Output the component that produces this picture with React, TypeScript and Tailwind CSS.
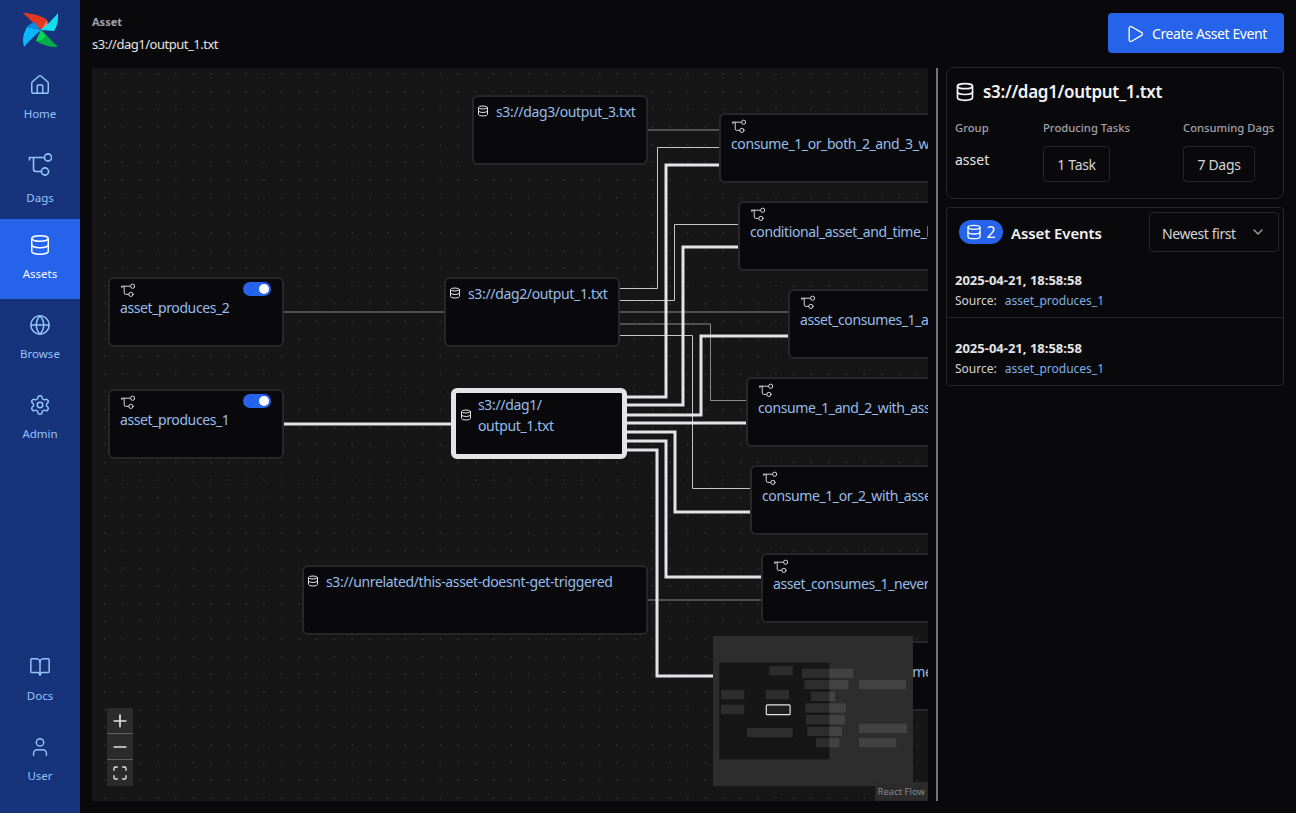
import { BookOpen, ChevronDown, Database, Globe, House, Maximize, Minus, Play, Plus, Settings, User } from "lucide-react";
import type { ReactNode } from "react";

const ui = "font-['Noto_Sans',sans-serif]";

function DagIcon({ className }: { className?: string }) {
  return (
    <svg viewBox="0 0 24 24" fill="none" stroke="currentColor" strokeWidth="1.6" strokeLinecap="round" className={className}>
      <path d="M1.5 5.5H15.5M1.5 5.5v2.5M5.5 5.5v11.5c0 1.6 1 2.5 2.5 2.5h5" />
      <circle cx="20" cy="5.5" r="3.6" />
      <circle cx="17" cy="19.5" r="3.6" />
    </svg>
  );
}

function Logo() {
  return (
    <svg viewBox="0 0 36 36" className="h-9 w-9">
      <path d="M0 1c8 0 17 2 24 7l-6 10z" fill="#e43921" />
      <path d="M24 8l-6 10 6-1c1-3 1-6 0-9z" fill="#ff7557" />
      <path d="M35 1c0 7 0 12-4 18L18 18c6-5 12-11 17-17z" fill="#11e1ee" />
      <path d="M35 35l-17-17-5 11c8 5 15 6 22 6z" fill="#00ad46" />
      <path d="M13 29l5-11 5 6c-3 3-6 5-10 5z" fill="#04d659" />
      <path d="M1 35C-1 28 0 22 4 15l14 3C12 23 6 29 1 35z" fill="#0cb6ff" />
      <path d="M4 15l14 3-7-8c-3 1-5 3-7 5z" fill="#0c8ce9" />
    </svg>
  );
}

function NavItem({ icon, label, active }: { icon: ReactNode; label: string; active?: boolean }) {
  return (
    <div className={`flex h-20 w-20 flex-col items-center justify-center gap-[9px] pb-0.5 text-[11.5px] ${active ? "bg-[#2563eb] text-white" : "text-[#93c5fd]"}`}>
      {icon}
      <span>{label}</span>
    </div>
  );
}

function Sidebar() {
  const icon = "h-[22px] w-[22px] stroke-[1.6]";
  return (
    <nav className="flex h-[813px] w-20 shrink-0 flex-col bg-[#17337b]">
      <div className="flex h-[59px] items-start justify-center pt-3 pl-px">
        <Logo />
      </div>
      <NavItem icon={<House className={icon} />} label="Home" />
      <NavItem icon={<DagIcon className="mt-[3px] mb-1 h-6 w-6" />} label="Dags" />
      <NavItem icon={<Database className={icon} />} label="Assets" active />
      <NavItem icon={<Globe className={icon} />} label="Browse" />
      <NavItem icon={<Settings className={icon} />} label="Admin" />
      <div className="mt-auto pb-3">
        <NavItem icon={<BookOpen className={icon} />} label="Docs" />
        <NavItem icon={<User className={icon} />} label="User" />
      </div>
    </nav>
  );
}

function Toggle() {
  return (
    <span className="absolute top-[3px] right-[11px] flex h-3.5 w-7 items-center justify-end rounded-full bg-[#2563eb] pr-0.5">
      <span className="h-2.5 w-2.5 rounded-full bg-white" />
    </span>
  );
}

type NodeProps = { x: number; y: number; w?: number; name: string; toggle?: boolean };

// x, y are the node's place on the graph canvas
function DagNode({ x, y, w = 176, name, toggle }: NodeProps) {
  return (
    <div style={{ left: x, top: y, width: w }} className="absolute h-[70px] rounded-md border-2 border-[#27272a] bg-[#09090b]">
      <DagIcon className="absolute top-1 left-[11px] h-3.5 w-3.5 text-[#e4e4e7]" />
      <span className="absolute top-[19px] left-[10px] text-sm leading-5 tracking-[-0.4px] whitespace-nowrap text-[#98bdea]">{name}</span>
      {toggle && <Toggle />}
    </div>
  );
}

function AssetNode({ x, y, w = 176, name }: NodeProps) {
  return (
    <div style={{ left: x, top: y, width: w }} className="absolute flex h-[70px] items-start gap-[7px] rounded-md border-2 border-[#27272a] bg-[#09090b] pt-[5px] pl-[3px]">
      <Database className="mt-[3px] h-3 w-3 shrink-0 text-[#e4e4e7]" />
      <span className="text-sm leading-5 tracking-[-0.35px] whitespace-nowrap text-[#98bdea]">{name}</span>
    </div>
  );
}

const thin: [string, boolean][] = [
  ["M556 62H627", false],
  ["M527 220.5H565.5V79.5H627", true],
  ["M527 232.5H582.5V156.5H647", true],
  ["M527 244H696", false],
  ["M527 256H618.5V332.5H654", false],
  ["M527 267.5H600.5V420.5H658", true],
  ["M192 244H352", false],
  ["M556 532H669", false],
];

const thick = [
  "M535 329H574V97H627",
  "M535 337H591V179H647",
  "M535 347H609V268H696",
  "M535 355H654",
  "M535 364H583V444H658",
  "M535 373H574V509H669",
  "M535 382H565V608H630",
  "M192 356H360",
];

function Edges() {
  return (
    <svg width="836" height="733" fill="none" className="absolute top-0 left-0">
      {thin.map(([d, light]) => (
        <path key={d} d={d} stroke={light ? "#c4c4c4" : "#8a8a8a"} strokeWidth="1" />
      ))}
      {thick.map((d) => (
        <path key={d} d={d} stroke="#e4e4e7" strokeWidth="3" />
      ))}
    </svg>
  );
}

const miniNodes = [
  [56.3, 30, 23.4, 9.3],
  [89, 32.7, 51.3, 9.3],
  [91.3, 44, 44, 9.3],
  [98, 55.7, 24, 9.3],
  [92.3, 67.3, 40.7, 9.3],
  [93, 79, 39, 9.3],
  [94.3, 90.7, 34.7, 9.3],
  [103, 102, 23.3, 9.3],
  [146, 44, 47, 9.3],
  [146, 87.7, 48, 9.3],
  [146, 102, 37.3, 9.3],
  [8, 54, 23.3, 9.3],
  [8, 68.7, 23.3, 9.3],
  [52.7, 54, 23.3, 9.3],
  [34, 92, 45.7, 9.3],
];

function MiniMap() {
  return (
    <svg viewBox="0 0 200 150" className="absolute top-[568px] left-[621px] h-[150px] w-[200px]">
      <rect width="200" height="150" fill="#2d2d2d" />
      <rect x="6.3" y="26.7" width="110" height="96.6" fill="#161616" />
      {miniNodes.map(([x, y, w, h]) => (
        <rect key={`${x}-${y}`} x={x} y={y} width={w} height={h} fill="#ffffff" fillOpacity="0.1" />
      ))}
      <rect x="53.3" y="68.9" width="23.8" height="9.8" rx="1" fill="#1f1f1f" stroke="#e4e4e7" strokeWidth="1.2" />
    </svg>
  );
}

function Controls() {
  const btn = "flex h-[26px] w-[26px] items-center justify-center bg-[#2b2b2b] text-[#e4e4e7]";
  return (
    <div className="absolute top-[640px] left-[15px] flex flex-col">
      <div className={`${btn} border-b border-[#5f5f5f]`}><Plus className="h-5 w-5" /></div>
      <div className={`${btn} border-b border-[#5f5f5f]`}><Minus className="h-5 w-5" /></div>
      <div className={btn}><Maximize className="h-4 w-4" /></div>
    </div>
  );
}

function Graph() {
  return (
    <div className="relative h-[733px] flex-1 overflow-hidden bg-[#161616] bg-[radial-gradient(circle,#4a4a4a_0.5px,transparent_0.8px)] bg-size-[17.67px_17.67px] bg-position-[4.2px_-2.8px]">
      <Edges />
      <AssetNode x={380} y={27} name="s3://dag3/output_3.txt" />
      <AssetNode x={352} y={209} name="s3://dag2/output_1.txt" />
      <AssetNode x={210} y={497} w={346} name="s3://unrelated/this-asset-doesnt-get-triggered" />
      <div className="absolute top-[320px] left-[359px] flex h-[71px] w-[176px] items-start rounded-md border-[5px] border-[#e4e4e7] bg-[#09090b] pt-px pl-1">
        <div className="flex items-center gap-1.5">
          <Database className="h-3 w-3 shrink-0 text-[#e4e4e7]" />
          <span className="text-sm leading-[21px] tracking-[-0.35px] text-[#98bdea]">s3://dag1/<br />output_1.txt</span>
        </div>
      </div>
      <DagNode x={16} y={209} name="asset_produces_2" toggle />
      <DagNode x={16} y={321} name="asset_produces_1" toggle />
      <DagNode x={627} y={45} w={400} name="consume_1_or_both_2_and_3_with_asset_expressions" />
      <DagNode x={646} y={133} w={400} name="conditional_asset_and_time_based_timetable" />
      <DagNode x={696} y={221} w={400} name="asset_consumes_1_and_2" />
      <DagNode x={654} y={309} w={400} name="consume_1_and_2_with_asset_expressions" />
      <DagNode x={658} y={397} w={400} name="consume_1_or_2_with_asset_expressions" />
      <DagNode x={669} y={485} w={400} name="asset_consumes_1_never_scheduled" />
      <DagNode x={733} y={573} w={400} name="asset_consumes_1" />
      <MiniMap />
      <Controls />
      <span className="absolute right-0 bottom-0 bg-[#2b2b2b] px-[3px] py-0.5 text-[9.5px] leading-[15px] text-[#8a8a8a]">React Flow</span>
    </div>
  );
}

function Stat({ label, children, className }: { label: string; children: ReactNode; className?: string }) {
  return (
    <div className={className}>
      <div className="text-[11.25px] leading-4 font-medium text-[#a1a1aa]">{label}</div>
      <div className="mt-2.5">{children}</div>
    </div>
  );
}

function EventRow({ last }: { last?: boolean }) {
  return (
    <div className={`px-2 text-xs ${last ? "pt-5 pb-1.5" : "border-b border-[#27272a] pt-2.5 pb-1.5"}`}>
      <div className="pb-px text-[13px] leading-5 font-bold text-[#e4e4e7]">2025-04-21, 18:58:58</div>
      <div className="leading-5 text-[#d4d4d8]">
        Source:<span className="ml-2 text-[#7fb0e6]">asset_produces_1</span>
      </div>
    </div>
  );
}

function DetailPanel() {
  const countBtn = "flex h-9 items-center justify-center rounded border border-[#27272a] pt-px text-sm tracking-[-0.3px] text-[#d4d4d8]";
  return (
    <aside className="-mt-px flex w-[338px] shrink-0 flex-col gap-2">
      <section className="h-[132px] rounded-lg border border-[#27272a] px-2 pt-3">
        <h2 className="flex items-center gap-2 text-[17px] leading-6 font-semibold tracking-[-0.3px] text-[#f4f4f5]">
          <Database className="h-5 w-5" />
          s3://dag1/output_1.txt
        </h2>
        <div className="mt-4 flex">
          <Stat label="Group" className="w-[88px]">
            <div className="pt-1 text-sm leading-5 text-[#e4e4e7]">asset</div>
          </Stat>
          <Stat label="Producing Tasks" className="w-[140px]">
            <div className={`${countBtn} w-[67px]`}>1 Task</div>
          </Stat>
          <Stat label="Consuming Dags">
            <div className={`${countBtn} w-[72px]`}>7 Dags</div>
          </Stat>
        </div>
      </section>
      <section className="rounded border border-[#27272a]">
        <div className="flex h-[52px] items-start justify-between pt-1 pr-1 pl-3">
          <div className="mt-2 flex h-6 items-center">
            <span className="flex h-6 w-11 items-center justify-center gap-1 rounded-full bg-[#2563eb] text-base text-white">
              <Database className="h-4 w-4" />2
            </span>
            <span className="ml-2 pt-px text-[15px] leading-5 font-semibold tracking-[-0.1px] text-[#f4f4f5]">Asset Events</span>
          </div>
          <div className="flex h-10 w-[130px] items-center justify-between rounded border border-[#27272a] px-3 text-sm tracking-[-0.4px] text-[#d4d4d8]">
            <span className="pt-[3px]">Newest first</span>
            <ChevronDown className="h-4 w-4 text-[#a1a1aa]" />
          </div>
        </div>
        <EventRow />
        <EventRow last />
      </section>
    </aside>
  );
}

export default function App() {
  return (
    <div className={`flex h-[813px] w-[1296px] overflow-hidden bg-[#09090b] ${ui}`}>
      <Sidebar />
      <main className="flex min-w-0 flex-1 flex-col pt-[13px] pr-3 pl-3">
        <header className="flex h-[55px] items-start justify-between">
          <div>
            <div className="pt-px text-[11px] leading-4 font-bold text-[#a1a1aa]">Asset</div>
            <div className="mt-1 text-[13px] leading-5 tracking-[-0.48px] text-[#e4e4e7]">s3://dag1/output_1.txt</div>
          </div>
          <button className="flex h-10 w-[176px] items-center gap-[7px] rounded bg-[#2563eb] pt-px pl-[17px] text-sm tracking-[-0.4px] text-white">
            <Play className="h-5 w-5 stroke-[1.6]" />
            Create Asset Event
          </button>
        </header>
        <div className="flex flex-1 items-start">
          <Graph />
          <div className="mx-2 h-[733px] w-0.5 shrink-0 bg-[#71717a]" />
          <DetailPanel />
        </div>
      </main>
    </div>
  );
}
